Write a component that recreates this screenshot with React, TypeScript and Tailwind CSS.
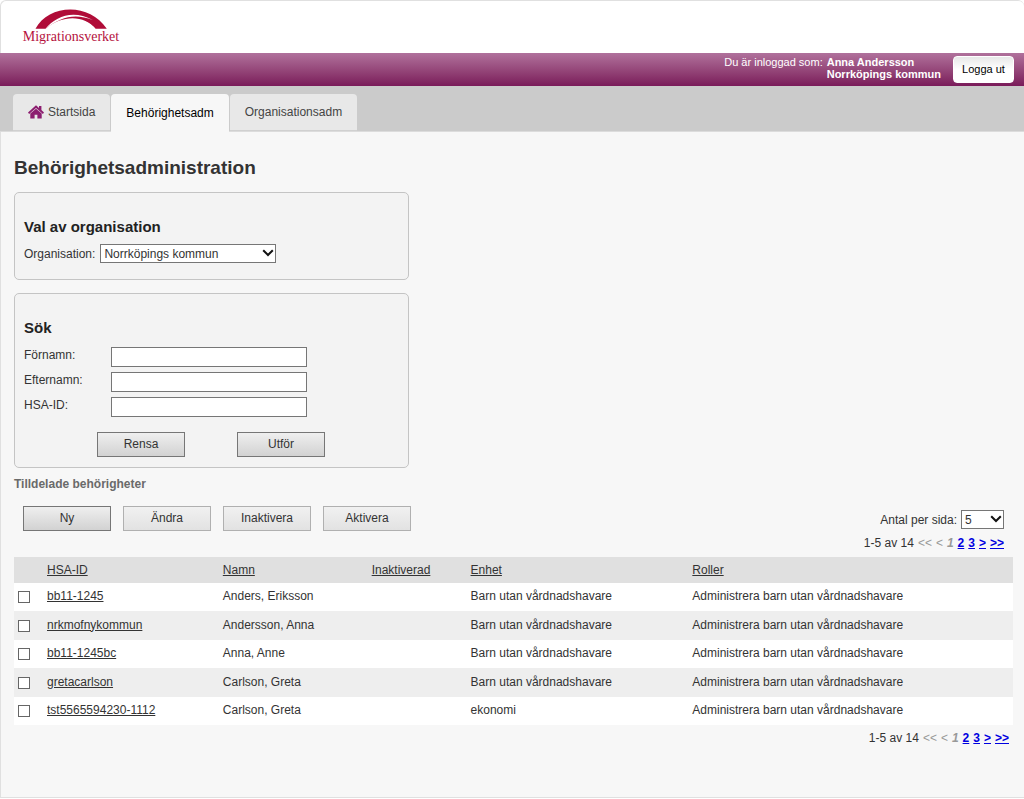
import { ReactNode, SelectHTMLAttributes } from "react";

type Row = { id: string; name: string; unit: string; role: string };

const role = "Administrera barn utan vårdnadshavare";
const rows: Row[] = [
  { id: "bb11-1245", name: "Anders, Eriksson", unit: "Barn utan vårdnadshavare", role },
  { id: "nrkmofnykommun", name: "Andersson, Anna", unit: "Barn utan vårdnadshavare", role },
  { id: "bb11-1245bc", name: "Anna, Anne", unit: "Barn utan vårdnadshavare", role },
  { id: "gretacarlson", name: "Carlson, Greta", unit: "Barn utan vårdnadshavare", role },
  { id: "tst5565594230-1112", name: "Carlson, Greta", unit: "ekonomi", role },
];

const columns = ["HSA-ID", "Namn", "Inaktiverad", "Enhet", "Roller"];

function Logo() {
  return (
    <a href="#" className="flex w-[98px] flex-col items-center text-[#b5123e]">
      <svg viewBox="0 0 72 20" className="h-5 w-[72px]" aria-hidden="true">
        <path d="M0.5 19.8 C13 -4.5 54 -7.5 71.8 19.8 L60.5 19.8 C50 6.5 28 5 10.5 19.8 Z" fill="#b00c38" />
        <path d="M10.5 19.8 C21 7 38 0.5 58 11 C40 4 26 7.5 10.5 19.8 Z" fill="#fff" />
        <path d="M12.5 19.8 C27 7.5 50 7.5 60.5 19.8 Z" fill="#fff" />
      </svg>
      <span className="font-['Liberation_Serif','Times_New_Roman',serif] text-sm leading-4">Migrationsverket</span>
    </a>
  );
}

function HomeIcon() {
  return (
    <svg viewBox="0 0 16 14" className="h-[14px] w-4" fill="#8c1d6f" aria-hidden="true">
      <path d="M8 0.3 L11 2.9 V1 H13.4 V5.1 L16 7.5 L14.9 8.9 L8 2.9 L1.1 8.9 L0 7.5 Z" />
      <path d="M8 3.7 L13.7 8.6 V13.5 H9.4 V9.8 H6.6 V13.5 H2.3 V8.6 Z" />
    </svg>
  );
}

function Select({ className, children, ...rest }: SelectHTMLAttributes<HTMLSelectElement> & { children: ReactNode }) {
  return (
    <span className="relative inline-flex">
      <select
        {...rest}
        className={`h-[19px] appearance-none border border-[#767676] bg-white pl-[3px] leading-4 text-[#333] ${className}`}
      >
        {children}
      </select>
      <svg viewBox="0 0 12 8" className="pointer-events-none absolute top-[5px] right-[2px] h-2 w-3" aria-hidden="true">
        <path d="M1.2 1.2 L6 6 L10.8 1.2" fill="none" stroke="#111" strokeWidth="2" />
      </svg>
    </span>
  );
}

function Button({ children, muted }: { children: ReactNode; muted?: boolean }) {
  return (
    <button
      type="button"
      className={
        muted
          ? "h-[25px] w-[88px] border border-[#b0b0b0] bg-linear-to-b from-[#f1f1f1] to-[#e2e2e2] pb-px"
          : "h-[25px] w-[88px] border border-[#767676] bg-linear-to-b from-[#efefef] to-[#d2d2d2] pb-px"
      }
    >
      {children}
    </button>
  );
}

function Field({ id, label }: { id: string; label: string }) {
  return (
    <div className="flex items-start">
      <label htmlFor={id} className="w-[87px] leading-4">
        {label}
      </label>
      <input id={id} type="text" className="h-5 w-[196px] border border-[#767676] bg-white px-1" />
    </div>
  );
}

function Pager() {
  return (
    <nav className="flex justify-end gap-1 leading-4" aria-label="Sidor">
      <span>1-5 av 14</span>
      <span className="text-[#999]">&lt;&lt;</span>
      <span className="text-[#999]">&lt;</span>
      <span className="font-bold text-[#999] italic">1</span>
      {["2", "3", ">", ">>"].map((t) => (
        <a key={t} href="#" className="font-bold text-[#0000e0] underline">
          {t}
        </a>
      ))}
    </nav>
  );
}

export default function App() {
  return (
    <div className="bg-white pb-px font-['Liberation_Sans',Arial,sans-serif] text-xs text-[#333]">
      <div className="flex min-h-[calc(100vh-1px)] flex-col rounded-t-md border-t border-b border-l border-[#e0e0e0] bg-[#f7f7f7]">
        <header>
          <div className="h-[52px] rounded-t-md bg-white pt-2 pl-[21px]">
            <Logo />
          </div>
          <div className="-ml-px flex h-[33px] items-start justify-end bg-linear-to-b from-[#b0719c] to-[#7a1a5a] pt-[3px] pr-[10px]">
            <div className="mr-3 flex gap-1 text-[11px] leading-3 text-white">
              <span>Du är inloggad som:</span>
              <strong>
                Anna Andersson
                <br />
                Norrköpings kommun
              </strong>
            </div>
            <button
              type="button"
              className="h-[27px] w-[61px] rounded-sm border border-white bg-linear-to-b from-[#e8e8e8] to-white to-50% text-[11px] text-black"
            >
              Logga ut
            </button>
          </div>
          <nav className="-ml-px flex h-[46px] items-end gap-px border-b border-[#dcdcdc] bg-[#cbcbcb] pl-[13px]">
            <a href="#" className="flex h-[37px] items-center gap-1 rounded-t-sm border-b border-[#d0d0d0] bg-[#e8e8e8] px-[15px] text-[#444]">
              <HomeIcon />
              Startsida
            </a>
            <a href="#" className="-mb-px flex h-[38px] items-center rounded-t-sm bg-[#f7f7f7] px-[15px] text-black">
              Behörighetsadm
            </a>
            <a href="#" className="flex h-[37px] items-center rounded-t-sm border-b border-[#d0d0d0] bg-[#e8e8e8] px-[15px] text-[#444]">
              Organisationsadm
            </a>
          </nav>
        </header>

        <main className="pt-6 pr-[11px] pl-[13px]">
          <h1 className="mb-3 text-[19px] leading-6 font-bold">Behörighetsadministration</h1>

          <section className="mb-[13px] max-w-[395px] rounded-[5px] border border-[#c4c4c4] bg-[#f3f3f3] px-[9px] pt-[25px] pb-4">
            <h2 className="mb-2 text-[15px] leading-[18px] font-bold text-[#222]">Val av organisation</h2>
            <div className="flex items-center gap-[5px]">
              <label htmlFor="org">Organisation:</label>
              <Select id="org" className="w-[176px]">
                <option>Norrköpings kommun</option>
              </Select>
            </div>
          </section>

          <section className="mb-2 max-w-[395px] rounded-[5px] border border-[#c4c4c4] bg-[#f3f3f3] px-[9px] pt-[25px] pb-[10px]">
            <h2 className="mb-[10px] text-[15px] leading-[18px] font-bold text-[#222]">Sök</h2>
            <div className="flex flex-col gap-[5px]">
              <Field id="first" label="Förnamn:" />
              <Field id="last" label="Efternamn:" />
              <Field id="hsa" label="HSA-ID:" />
            </div>
            <div className="mt-[15px] flex gap-[52px] pl-[73px]">
              <Button>Rensa</Button>
              <Button>Utför</Button>
            </div>
          </section>

          <h3 className="text-xs leading-4 font-bold text-[#6a6a6a]">Tilldelade behörigheter</h3>

          <div className="mt-[14px] mb-1 flex items-start justify-between pr-[9px] pl-[9px]">
            <div className="flex gap-3">
              <Button>Ny</Button>
              <Button muted>Ändra</Button>
              <Button muted>Inaktivera</Button>
              <Button muted>Aktivera</Button>
            </div>
            <div className="flex items-center gap-1 pt-1">
              <label htmlFor="per">Antal per sida:</label>
              <Select id="per" className="w-[43px]">
                <option>5</option>
              </Select>
            </div>
          </div>
          <div className="pr-[9px]">
            <Pager />
          </div>

          <table className="mt-[6px] w-full table-fixed border-collapse text-left leading-4">
            <colgroup>
              <col className="w-[33px]" />
              <col className="w-[17.6%]" />
              <col className="w-[14.9%]" />
              <col className="w-[9.9%]" />
              <col className="w-[22.2%]" />
              <col />
            </colgroup>
            <thead>
              <tr className="h-[26px] bg-[#e0e0e0]">
                <th aria-label="Välj" className="p-0" />
                {columns.map((c) => (
                  <th key={c} className="p-0 pb-px font-normal">
                    <a href="#" className="underline">
                      {c}
                    </a>
                  </th>
                ))}
              </tr>
            </thead>
            <tbody>
              {rows.map((r) => (
                <tr key={r.id} className="h-7 bg-white even:h-[29px] even:bg-[#eeeeee]">
                  <td className="p-0 pl-1">
                    <input
                      type="checkbox"
                      aria-label={r.id}
                      className="block size-3 appearance-none border border-[#666] bg-white checked:bg-[#666]"
                    />
                  </td>
                  <td className="p-0 pb-[2px]">
                    <a href="#" className="underline">
                      {r.id}
                    </a>
                  </td>
                  <td className="p-0 pb-[2px]">{r.name}</td>
                  <td className="p-0" />
                  <td className="p-0 pb-[2px]">{r.unit}</td>
                  <td className="p-0 pb-[2px]">{r.role}</td>
                </tr>
              ))}
            </tbody>
          </table>
          <div className="pt-[5px] pr-1">
            <Pager />
          </div>
        </main>
      </div>
    </div>
  );
}
